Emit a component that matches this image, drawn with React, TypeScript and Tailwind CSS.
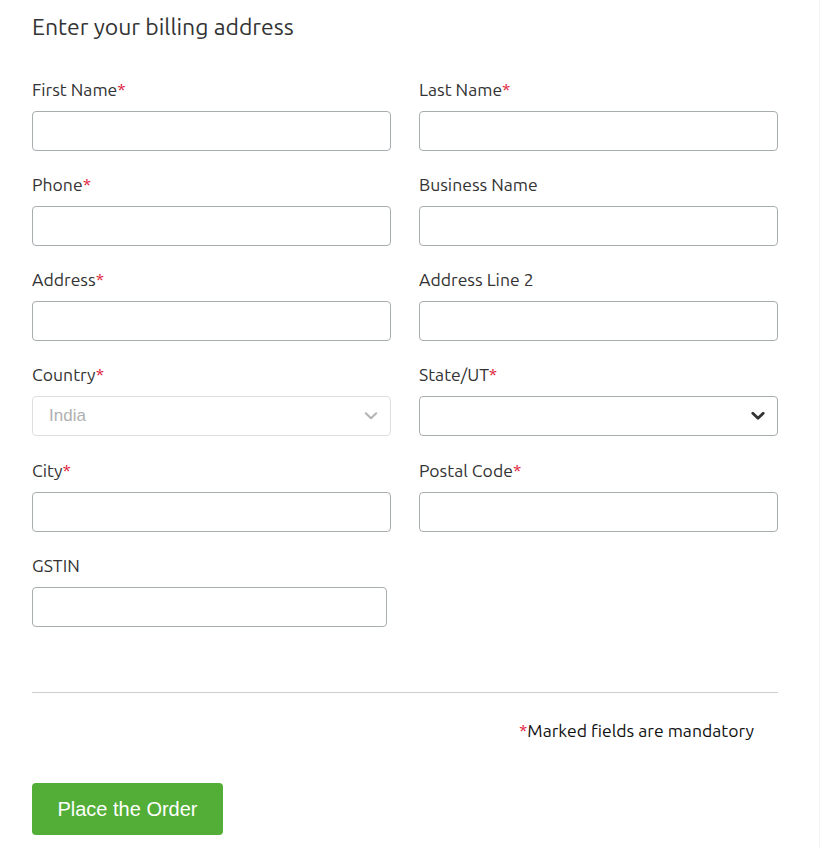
import React from "react";

const font = { fontFamily: "Ubuntu, 'Open Sans', 'Noto Sans', sans-serif" };

function Label({ text, required }: { text: string; required?: boolean }) {
  return (
    <label className="block h-6 leading-6 text-[17.6px] text-[#333] mb-[9px]">
      {text}
      {required && <span className="text-[#e0203a]">*</span>}
    </label>
  );
}

function Chevron({ light }: { light?: boolean }) {
  return (
    <svg width="14" height="9" viewBox="0 0 14 9" className="absolute right-[12px] top-1/2 -translate-y-1/2 pointer-events-none">
      <polyline
        points="1.8,1.8 7,6.8 12.2,1.8"
        fill="none"
        stroke={light ? "#b5b5b5" : "#333"}
        strokeWidth={light ? 2.2 : 2.8}
        strokeLinecap="round"
        strokeLinejoin="round"
      />
    </svg>
  );
}

function Field({ label, required, children }: { label: string; required?: boolean; children?: React.ReactNode }) {
  return (
    <div>
      <Label text={label} required={required} />
      {children ?? <input className="block w-full h-10 rounded-[4px] border border-[#a8adb0] bg-white px-3 outline-none" />}
    </div>
  );
}

export default function App() {
  return (
    <div className="min-h-screen bg-white border-r border-[#f4f4f4]" style={font}>
      <div className="pl-8 pr-[41px] pt-3">
        <h1 className="text-[23px] leading-[30px] text-[#333] font-normal">Enter your billing address</h1>

        <div className="mt-9 grid grid-cols-2 gap-x-[28px] gap-y-[22px]">
          <Field label="First Name" required />
          <Field label="Last Name" required />
          <Field label="Phone" required />
          <Field label="Business Name" />
          <Field label="Address" required />
          <Field label="Address Line 2" />
          <Field label="Country" required>
            <div className="relative h-10 rounded-[4px] border border-[#dedede] bg-white flex items-center px-4">
              <span className="text-[17px] text-[#b0b0b0]" style={{ fontFamily: "'Liberation Sans', Arial, sans-serif" }}>India</span>
              <Chevron light />
            </div>
          </Field>
          <Field label="State/UT" required>
            <div className="relative h-10 rounded-[4px] border border-[#a8adb0] bg-white">
              <Chevron />
            </div>
          </Field>
          <div className="pt-px">
            <Field label="City" required />
          </div>
          <div className="pt-px">
            <Field label="Postal Code" required />
          </div>
          <div className="pr-1">
            <Field label="GSTIN" />
          </div>
        </div>

        <div className="mt-[65px] border-t border-[#cfcfcf]" />

        <p className="mt-[26px] text-right pr-6 text-[17.6px] leading-6 text-[#111]">
          <span className="text-[#e0203a]">*</span>Marked fields are mandatory
        </p>

        <button
          className="mt-[40px] w-[191px] h-[52px] rounded-[4px] bg-[#52ae36] text-white text-[20px]"
          style={{ fontFamily: "'Liberation Sans', Arial, sans-serif" }}
        >
          Place the Order
        </button>
      </div>
    </div>
  );
}
